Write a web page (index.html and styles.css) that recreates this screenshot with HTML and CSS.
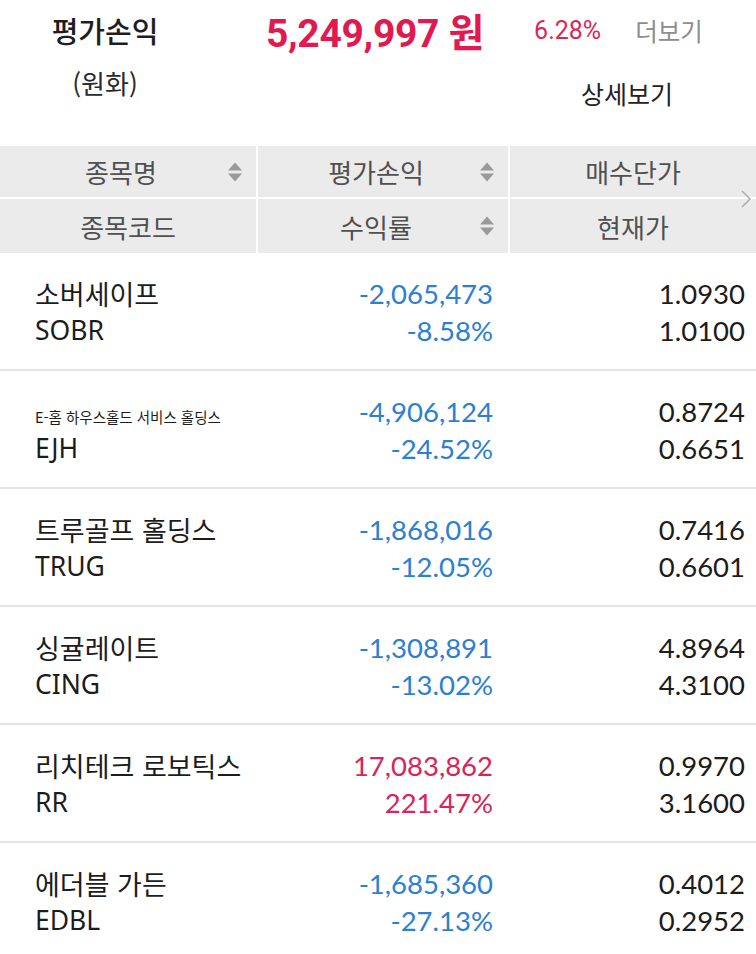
FILE: index.html
```html
<!DOCTYPE html>
<html lang="ko">
<head>
<meta charset="utf-8">
<title>평가손익</title>
<link rel="stylesheet" href="styles.css">
</head>
<body>
<div class="page">
  <section class="summary">
    <div class="summary-label">
      <div class="label-title">평가손익</div>
      <div class="label-sub">(원화)</div>
    </div>
    <div class="summary-right">
      <div class="summary-main">
        <span class="amount">5,249,997 원</span>
        <span class="pct">6.28%</span>
        <span class="more">더보기</span>
      </div>
      <div class="detail">상세보기</div>
    </div>
  </section>

  <section class="thead">
    <div class="th sortable">종목명<span class="sort"><i class="up"></i><i class="down"></i></span></div>
    <div class="th sortable">평가손익<span class="sort"><i class="up"></i><i class="down"></i></span></div>
    <div class="th">매수단가</div>
    <div class="th">종목코드</div>
    <div class="th sortable">수익률<span class="sort"><i class="up"></i><i class="down"></i></span></div>
    <div class="th">현재가</div>
    <svg class="chev" width="12" height="20" viewBox="0 0 12 20"><polyline points="2,2 10,10 2,18" fill="none" stroke="#b0b0b0" stroke-width="1.6"/></svg>
  </section>

  <section class="rows">
    <div class="row">
      <div class="c1"><div class="name">소버세이프</div><div class="code">SOBR</div></div>
      <div class="c2 neg"><div>-2,065,473</div><div>-8.58%</div></div>
      <div class="c3"><div>1.0930</div><div>1.0100</div></div>
    </div>
    <div class="row">
      <div class="c1"><div class="name"><span class="small">E-홈 하우스홀드 서비스 홀딩스</span></div><div class="code">EJH</div></div>
      <div class="c2 neg"><div>-4,906,124</div><div>-24.52%</div></div>
      <div class="c3"><div>0.8724</div><div>0.6651</div></div>
    </div>
    <div class="row">
      <div class="c1"><div class="name">트루골프 홀딩스</div><div class="code">TRUG</div></div>
      <div class="c2 neg"><div>-1,868,016</div><div>-12.05%</div></div>
      <div class="c3"><div>0.7416</div><div>0.6601</div></div>
    </div>
    <div class="row">
      <div class="c1"><div class="name">싱귤레이트</div><div class="code">CING</div></div>
      <div class="c2 neg"><div>-1,308,891</div><div>-13.02%</div></div>
      <div class="c3"><div>4.8964</div><div>4.3100</div></div>
    </div>
    <div class="row">
      <div class="c1"><div class="name">리치테크 로보틱스</div><div class="code">RR</div></div>
      <div class="c2 pos"><div>17,083,862</div><div>221.47%</div></div>
      <div class="c3"><div>0.9970</div><div>3.1600</div></div>
    </div>
    <div class="row">
      <div class="c1"><div class="name">에더블 가든</div><div class="code">EDBL</div></div>
      <div class="c2 neg"><div>-1,685,360</div><div>-27.13%</div></div>
      <div class="c3"><div>0.4012</div><div>0.2952</div></div>
    </div>
  </section>
</div>
</body>
</html>
```
FILE: styles.css
```css
* { box-sizing: border-box; margin: 0; padding: 0; }
html, body { background: #fff; }
body {
  width: 756px;
  height: 954px;
  overflow: hidden;
  font-family: "Noto Sans CJK KR", "Noto Sans", sans-serif;
  color: #222;
}
.page { width: 756px; }

/* summary */
.summary {
  display: grid;
  grid-template-columns: 210px 1fr;
  height: 146px;
}
.summary-label {
  display: flex;
  flex-direction: column;
  align-items: center;
}
.label-title {
  font-size: 29px;
  font-weight: 500;
  line-height: 60px;
  color: #1e1e1e;
}
.label-sub {
  font-size: 26px;
  line-height: 30px;
  margin-top: 8px;
  color: #2a2a2a;
}
.summary-main {
  display: flex;
  align-items: center;
  height: 60px;
  padding-left: 56px;
}
.amount {
  font-family: "Roboto", "Noto Sans CJK KR", sans-serif;
  font-weight: 700;
  font-size: 39px;
  color: #e2194f;
  letter-spacing: -0.3px;
}
.pct {
  font-family: "Roboto", sans-serif;
  font-size: 25px;
  color: #d8285a;
  margin-left: 50px;
}
.more {
  font-size: 24.5px;
  color: #8d8d8d;
  margin-left: 34px;
}
.detail {
  font-size: 25px;
  line-height: 30px;
  margin-top: 18px;
  margin-left: 371px;
  color: #222;
}

/* table header */
.thead {
  position: relative;
  display: grid;
  grid-template-columns: 256px 250px 1fr;
  grid-template-rows: 51px 54px;
  gap: 2px;
  height: 107px;
}
.th {
  position: relative;
  background: #ebebeb;
  display: flex;
  align-items: center;
  justify-content: center;
  font-size: 26px;
  color: #505050;
}
.th.sortable { padding-right: 14px; }
.sort {
  position: absolute;
  right: 14px;
  top: 50%;
  transform: translateY(-50%);
  display: flex;
  flex-direction: column;
  gap: 3px;
}
.sort i {
  display: block;
  width: 0;
  height: 0;
  border-left: 7px solid transparent;
  border-right: 7px solid transparent;
}
.sort .up { border-bottom: 8px solid #9a9a9a; }
.sort .down { border-top: 8px solid #9a9a9a; }
.chev {
  position: absolute;
  right: 4px;
  top: 43px;
}

/* rows */
.row {
  display: grid;
  grid-template-columns: 258px 250px 1fr;
  padding: 22px 0 20px;
  border-bottom: 2px solid #e4e4e4;
  line-height: 37px;
  font-size: 27px;
}
.c1 { padding-left: 35px; color: #1c1c1c; }
.name { white-space: nowrap; height: 37px; }
.small { font-size: 14.5px; line-height: 1; }
.code { font-family: "Noto Sans", sans-serif; font-size: 26.5px; }
.c2 {
  text-align: right;
  padding-right: 15px;
  font-family: "Lato", sans-serif;
  font-size: 27.5px;
}
.c3 {
  text-align: right;
  padding-right: 11px;
  font-family: "Lato", sans-serif;
  font-size: 27.5px;
  color: #1c1c1c;
}
.neg { color: #2b80d1; }
.pos { color: #d8245a; }
```
